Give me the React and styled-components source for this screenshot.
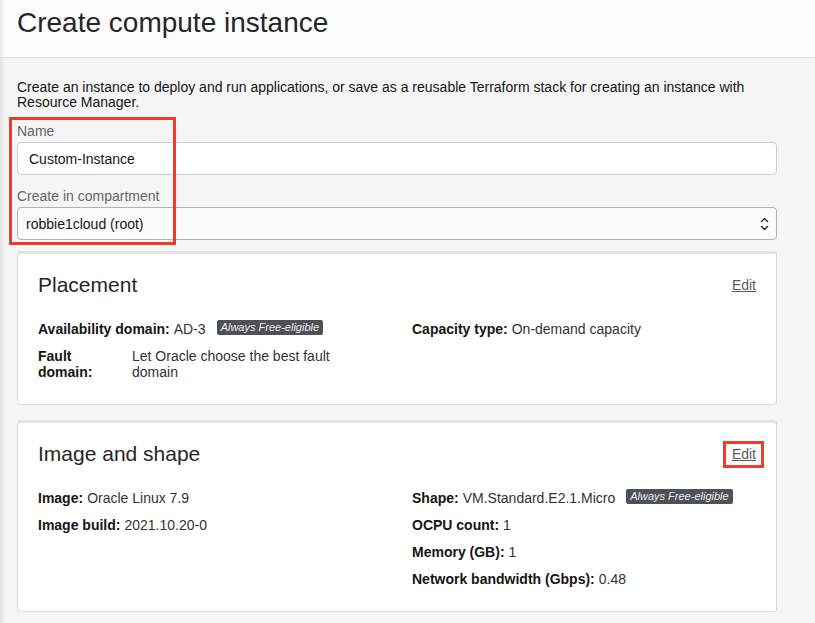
import React from 'react';
import styled, { createGlobalStyle } from 'styled-components';

const GlobalStyle = createGlobalStyle`
  html, body {
    margin: 0;
    padding: 0;
    background: #f5f5f5;
    font-family: "Liberation Sans", Arial, Helvetica, sans-serif;
    color: #161513;
  }
  * { box-sizing: border-box; }
`;

const edgeShade = 'linear-gradient(to right, rgba(0, 0, 0, 0.07), rgba(0, 0, 0, 0) 6px)';

const Page = styled.div`
  min-height: 100vh;
  background: ${edgeShade}, #f5f5f5;
`;

const Header = styled.header`
  background: ${edgeShade}, #fcfcfc;
  border-bottom: 1px solid #dedede;
  padding: 6px 38px 17px 17px;
`;

const Title = styled.h1`
  margin: 0;
  font-size: 28px;
  line-height: 34px;
  font-weight: 400;
  color: #262626;
`;

const Main = styled.main`
  padding: 22px 38px 0 17px;
`;

const Description = styled.p`
  margin: 0 0 14px;
  font-size: 14px;
  line-height: 15px;
  color: #161513;
`;

const FieldGroup = styled.div`
  position: relative;
  display: flex;
  flex-direction: column;
  gap: 14px;
`;

// red annotation box drawn over the two fields
const Highlight = styled.div`
  position: absolute;
  top: -7px;
  left: -8px;
  width: 167px;
  height: 128px;
  border: 3px solid #ee3b2b;
  pointer-events: none;
`;

const Field = styled.label`
  display: flex;
  flex-direction: column;
  gap: 3px;
`;

const Label = styled.span`
  font-size: 14px;
  line-height: 15px;
  color: #666;
`;

const Input = styled.div`
  height: 33px;
  display: flex;
  align-items: center;
  padding: 0 11px;
  background: #fff;
  border: 1px solid #cfcfcf;
  border-radius: 4px;
  font-size: 14px;
  color: #161513;
`;

const Select = styled(Input)`
  justify-content: space-between;
  padding: 0 7px 0 8px;
  background: #fbfbfb;
  border-color: #aeb3b9;
`;

const Cards = styled.div`
  display: flex;
  flex-direction: column;
  gap: 15px;
  margin-top: 11px;
`;

const Card = styled.section`
  background: #fff;
  border: 1px solid #dcdcdc;
  border-top: 3px solid #e2e2e6;
  border-radius: 4px;
  padding: 19px 20px 24px;
`;

const CardHead = styled.div`
  display: flex;
  align-items: center;
  justify-content: space-between;
`;

const CardTitle = styled.h2`
  margin: 0;
  font-size: 21px;
  line-height: 24px;
  font-weight: 400;
  color: #262626;
`;

const EditLink = styled.a`
  position: relative;
  font-size: 14px;
  line-height: 16px;
  color: #5a5a5a;
  text-decoration: underline;
  cursor: pointer;

  ${(p) => p.$marked && `
    &::after {
      content: '';
      position: absolute;
      top: -5px;
      bottom: -6px;
      left: -9px;
      right: -8px;
      border: 3px solid #ee3b2b;
    }
  `}
`;

const Grid = styled.div`
  display: grid;
  grid-template-columns: 344px 344px;
  column-gap: 30px;
  margin-top: 24px;
`;

const Column = styled.div`
  display: flex;
  flex-direction: column;
  gap: 11px;
`;

const Row = styled.div`
  display: flex;
  align-items: flex-start;
  font-size: 14px;
  line-height: 16px;
  color: #333;
`;

const Key = styled.span`
  font-weight: 700;
  color: #161513;
  margin-right: 4px;
  ${(p) => p.$width && `width: ${p.$width}px; flex: none; margin-right: 0; padding-right: 10px;`}
`;

const Value = styled.span`
  ${(p) => p.$wrap && 'flex: 1; padding-right: 20px;'}
`;

const Badge = styled.span`
  display: inline-block;
  height: 15px;
  margin: -1px 0 0 11px;
  padding: 0 4px;
  border-radius: 2px;
  background: #4e5156;
  color: #ececec;
  font-size: 11px;
  font-style: italic;
  line-height: 15px;
`;

const Chevrons = () => (
  <svg width="9" height="14" viewBox="0 0 9 14" fill="none" stroke="#222" strokeWidth="1.4" strokeLinecap="round" strokeLinejoin="round">
    <path d="M1.5 4.5 L4.5 1.5 L7.5 4.5" />
    <path d="M1.5 9.5 L4.5 12.5 L7.5 9.5" />
  </svg>
);

export default function App() {
  return (
    <Page>
      <GlobalStyle />
      <Header>
        <Title>Create compute instance</Title>
      </Header>
      <Main>
        <Description>
          Create an instance to deploy and run applications, or save as a reusable Terraform stack for creating an instance with Resource Manager.
        </Description>

        <FieldGroup>
          <Field>
            <Label>Name</Label>
            <Input>Custom-Instance</Input>
          </Field>
          <Field>
            <Label>Create in compartment</Label>
            <Select>
              <span>robbie1cloud (root)</span>
              <Chevrons />
            </Select>
          </Field>
          <Highlight />
        </FieldGroup>

        <Cards>
          <Card>
            <CardHead>
              <CardTitle>Placement</CardTitle>
              <EditLink>Edit</EditLink>
            </CardHead>
            <Grid>
              <Column>
                <Row>
                  <Key>Availability domain:</Key>
                  <Value>AD-3</Value>
                  <Badge>Always Free-eligible</Badge>
                </Row>
                <Row>
                  <Key $width={94}>Fault domain:</Key>
                  <Value $wrap>Let Oracle choose the best fault domain</Value>
                </Row>
              </Column>
              <Column>
                <Row>
                  <Key>Capacity type:</Key>
                  <Value>On-demand capacity</Value>
                </Row>
              </Column>
            </Grid>
          </Card>

          <Card>
            <CardHead>
              <CardTitle>Image and shape</CardTitle>
              <EditLink $marked>Edit</EditLink>
            </CardHead>
            <Grid>
              <Column>
                <Row>
                  <Key>Image:</Key>
                  <Value>Oracle Linux 7.9</Value>
                </Row>
                <Row>
                  <Key>Image build:</Key>
                  <Value>2021.10.20-0</Value>
                </Row>
              </Column>
              <Column>
                <Row>
                  <Key>Shape:</Key>
                  <Value>VM.Standard.E2.1.Micro</Value>
                  <Badge>Always Free-eligible</Badge>
                </Row>
                <Row>
                  <Key>OCPU count:</Key>
                  <Value>1</Value>
                </Row>
                <Row>
                  <Key>Memory (GB):</Key>
                  <Value>1</Value>
                </Row>
                <Row>
                  <Key>Network bandwidth (Gbps):</Key>
                  <Value>0.48</Value>
                </Row>
              </Column>
            </Grid>
          </Card>
        </Cards>
      </Main>
    </Page>
  );
}
